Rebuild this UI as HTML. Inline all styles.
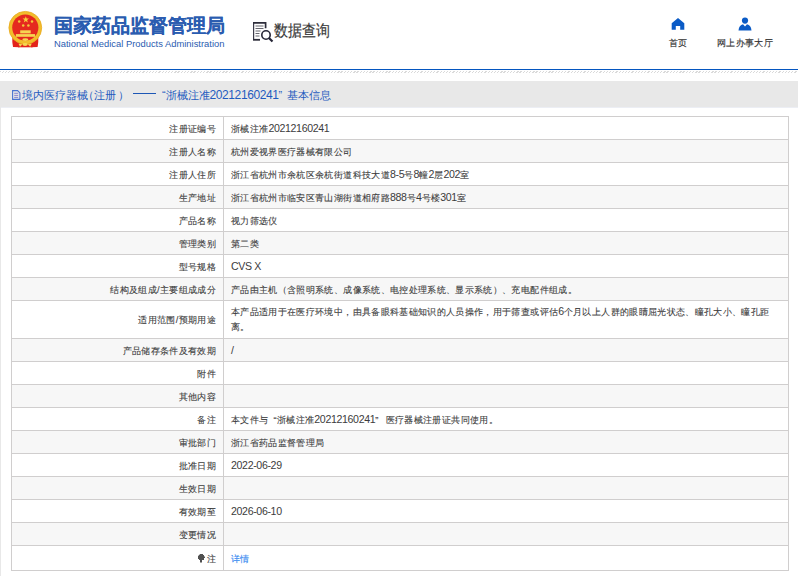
<!DOCTYPE html>
<html><head><meta charset="utf-8">
<style>
*{margin:0;padding:0;box-sizing:border-box}
html,body{width:798px;height:576px;overflow:hidden;background:#fff;font-family:"Liberation Sans",sans-serif;position:relative}
.abs{position:absolute}
#header{position:absolute;left:0;top:0;width:798px;height:69px;background:#fff}
#blueline{position:absolute;left:0;top:69px;width:798px;height:1px;background:#0556c0}
#hatch{position:absolute;left:0;top:71px;width:798px;height:2px;
 background:repeating-linear-gradient(135deg,#dadada 0 0.9px,#fff 0.9px 2.26px)}
#graybg{position:absolute;left:0;top:81px;width:798px;height:495px;background:#e8e8e8}
#panel{position:absolute;left:1px;top:107px;width:797px;height:469px;background:#fff;border-top:1px solid #eceef4}
#crumb{position:absolute;left:12px;top:87px;font-size:10.8px;line-height:17px;color:#1f5bbf;white-space:nowrap}
.row{position:absolute;left:11px;width:778px}
.hl{position:absolute;left:11px;width:778px;height:1px;background:#d0cece}
#vl{position:absolute;left:11px;top:116px;width:1px;height:455px;background:#d0cece}
#vr{position:absolute;left:788px;top:116px;width:1px;height:455px;background:#d0cece}
#vm{position:absolute;left:223px;top:116px;width:1px;height:455px;background:#d0cece}
.lab{position:absolute;right:582px;font-size:9.4px;line-height:16px;color:#3c3c3c;-webkit-text-stroke:0.1px #3c3c3c;letter-spacing:0.35px;white-space:nowrap;text-align:right}
.val{position:absolute;left:231px;font-size:9.4px;line-height:16px;color:#3c3c3c;-webkit-text-stroke:0.1px #3c3c3c;letter-spacing:0.35px;white-space:nowrap}
.val.multi{line-height:15px;white-space:normal;width:550px}
.link{color:#2f86f0;-webkit-text-stroke:0.1px #2f86f0}
.lat{font-size:10.6px;letter-spacing:-0.35px;-webkit-text-stroke:0;line-height:0;position:relative;top:0.4px}
.bulb{display:inline-block;width:7px;height:9px;margin-right:1.5px;vertical-align:-1px;background:radial-gradient(circle at 3.3px 3.3px,#505050 3.2px,transparent 3.4px),linear-gradient(#505050,#505050) 2.2px 6px/2.2px 2.5px no-repeat}
</style></head><body>
<div id="header">
 <svg class="abs" style="left:8px;top:10px" width="36" height="40" viewBox="0 0 36 40">
  <path d="M4.3 27 L11 29.5 L11.5 37.3 L5 37 Q4 32 4.3 27 Z" fill="#e3231a"/>
  <path d="M30.3 27 L23.6 29.5 L23.1 37.3 L29.6 37 Q30.6 32 30.3 27 Z" fill="#e3231a"/>
  <rect x="10" y="31" width="14.6" height="6.3" fill="#e3231a"/>
  <circle cx="17.3" cy="17.8" r="16.4" fill="#f2bd2c"/>
  <circle cx="17.3" cy="17.8" r="16.4" fill="none" stroke="#e9a91e" stroke-width="0.8"/>
  <circle cx="17.3" cy="17.6" r="13.1" fill="#e5291f"/>
  <polygon points="17.8,6.3 18.6,8.6 21,8.6 19.1,10.1 19.8,12.4 17.8,11 15.8,12.4 16.5,10.1 14.6,8.6 17,8.6" fill="#f7d23a"/>
  <circle cx="11.2" cy="11.5" r="1.25" fill="#f2c83a"/>
  <circle cx="24" cy="11.5" r="1.25" fill="#f2c83a"/>
  <circle cx="15.2" cy="15.5" r="1.25" fill="#f2c83a"/>
  <circle cx="20.4" cy="15.5" r="1.25" fill="#f2c83a"/>
  <rect x="12.2" y="20.3" width="10.5" height="3.1" fill="#f6d551"/>
  <rect x="7.9" y="24.1" width="19.1" height="2.7" fill="#f6d551"/>
  <ellipse cx="17.3" cy="29.6" rx="3" ry="1.3" fill="#f6d551"/>
  <ellipse cx="17.1" cy="34.5" rx="2.6" ry="1.4" fill="#f6d551"/>
  <path d="M14.5 34.2 L10.5 33.8 L12 36.8 Z M19.7 34.2 L23.7 33.8 L22.2 36.8 Z" fill="#f6d551"/>
 </svg>
 <div class="abs" style="left:54px;top:13px;font-size:18.8px;line-height:26px;font-weight:bold;color:#2a5cb0;-webkit-text-stroke:0.1px #2a5cb0;white-space:nowrap">国家药品监督管理局</div>
 <div class="abs" style="left:54px;top:37px;font-size:9.4px;line-height:14px;letter-spacing:0;color:#2a5cb0;white-space:nowrap">National Medical Products Administration</div>
 <svg class="abs" style="left:252px;top:21px" width="24" height="22" viewBox="0 0 24 22">
  <path d="M1.6 2 V18" fill="none" stroke="#3a3a48" stroke-width="1.2"/>
  <path d="M1 1.8 H13.6 V7.2" fill="none" stroke="#2d2d3a" stroke-width="1.7"/>
  <path d="M1 18.8 H8" stroke="#2d2d3a" stroke-width="1.8"/>
  <path d="M3.5 5 H11.5 M3.5 7.5 H11.5 M3.5 10 H8.5 M3.5 12.5 H7.5 M3.5 15 H7.5" stroke="#55555f" stroke-width="0.9"/>
  <circle cx="14" cy="14" r="4.2" fill="none" stroke="#262636" stroke-width="1.6"/>
  <path d="M17 17 L20.5 20.5" stroke="#262636" stroke-width="2.2"/>
 </svg>
 <div class="abs" style="left:274px;top:18.5px;font-size:14px;line-height:20px;color:#3a3a3a;-webkit-text-stroke:0.15px #3a3a3a;white-space:nowrap;transform:scaleY(1.14);transform-origin:0 0">数据查询</div>
 <svg class="abs" style="left:671px;top:17px" width="14" height="14" viewBox="0 0 14 14">
  <path d="M7 1 L13.3 6.2 V12.8 H9.2 V9 H4.8 V12.8 H0.7 V6.2 Z" fill="#0b5bc6"/>
 </svg>
 <div class="abs" style="left:668.5px;top:34.5px;font-size:9.4px;line-height:16px;letter-spacing:0.35px;color:#333;-webkit-text-stroke:0.15px #333;white-space:nowrap">首页</div>
 <svg class="abs" style="left:738px;top:17px" width="14" height="14" viewBox="0 0 14 14">
  <circle cx="7" cy="3.6" r="3.1" fill="#0b5bc6"/>
  <path d="M0.5 13.5 Q1 8 5 7.2 L7 9.5 L9 7.2 Q13 8 13.5 13.5 Z" fill="#0b5bc6"/>
 </svg>
 <div class="abs" style="left:717px;top:34.5px;font-size:9.4px;line-height:16px;letter-spacing:0.35px;color:#333;-webkit-text-stroke:0.15px #333;white-space:nowrap">网上办事大厅</div>
</div>
<div id="blueline"></div>
<div id="hatch"></div>
<div id="graybg"></div>
<div id="crumb"><svg style="vertical-align:-1px;margin-right:1.5px" width="8.5" height="10" viewBox="0 0 8.5 10"><path d="M0.6 0.6 H5.6 L7.9 2.9 V9.4 H0.6 Z" fill="none" stroke="#4a74d0" stroke-width="1.1"/><path d="M2.2 3.3 H6.2 M2.2 5.4 H6.2 M2.2 7.4 H6.2" stroke="#7a78c8" stroke-width="0.9"/></svg>境内医疗器械<span style="margin-left:-5px">（</span>注册<span style="margin-left:2px">）</span><span style="display:inline-block;width:23px;height:1px;background:#1d57b5;vertical-align:4.6px;margin-left:4px"></span><span style="margin-left:6px">“</span>浙械注准<span style="font-size:12px;letter-spacing:-0.42px;position:relative;top:0.3px">20212160241</span>”<span style="margin-left:4.5px">基本信息</span></div>
<div id="panel"></div>
<div class="row" style="top:116px;height:23px;background:#ffffff"></div>
<div class="hl" style="top:116px"></div>
<div class="lab" style="top:120.5px">注册证编号</div>
<div class="val" style="top:120.5px">浙械注准<span class="lat">20212160241</span></div>
<div class="row" style="top:139px;height:23px;background:#f7f7f7"></div>
<div class="hl" style="top:139px"></div>
<div class="lab" style="top:143.5px">注册人名称</div>
<div class="val" style="top:143.5px">杭州爱视界医疗器械有限公司</div>
<div class="row" style="top:162px;height:23px;background:#ffffff"></div>
<div class="hl" style="top:162px"></div>
<div class="lab" style="top:166.5px">注册人住所</div>
<div class="val" style="top:166.5px">浙江省杭州市余杭区余杭街道科技大道<span class="lat">8-5</span>号<span class="lat">8</span>幢<span class="lat">2</span>层<span class="lat">202</span>室</div>
<div class="row" style="top:185px;height:23px;background:#f7f7f7"></div>
<div class="hl" style="top:185px"></div>
<div class="lab" style="top:189.5px">生产地址</div>
<div class="val" style="top:189.5px">浙江省杭州市临安区青山湖街道相府路<span class="lat">888</span>号<span class="lat">4</span>号楼<span class="lat">301</span>室</div>
<div class="row" style="top:208px;height:23px;background:#ffffff"></div>
<div class="hl" style="top:208px"></div>
<div class="lab" style="top:212.5px">产品名称</div>
<div class="val" style="top:212.5px">视力筛选仪</div>
<div class="row" style="top:231px;height:23px;background:#f7f7f7"></div>
<div class="hl" style="top:231px"></div>
<div class="lab" style="top:235.5px">管理类别</div>
<div class="val" style="top:235.5px">第二类</div>
<div class="row" style="top:254px;height:23px;background:#ffffff"></div>
<div class="hl" style="top:254px"></div>
<div class="lab" style="top:258.5px">型号规格</div>
<div class="val" style="top:258.5px"><span class="lat">CVS X</span></div>
<div class="row" style="top:277px;height:23px;background:#f7f7f7"></div>
<div class="hl" style="top:277px"></div>
<div class="lab" style="top:281.5px">结构及组成/主要组成成分</div>
<div class="val" style="top:281.5px">产品由主机（含照明系统、成像系统、电控处理系统、显示系统）、充电配件组成。</div>
<div class="row" style="top:300px;height:38px;background:#ffffff"></div>
<div class="hl" style="top:300px"></div>
<div class="lab" style="top:312.0px">适用范围/预期用途</div>
<div class="val multi" style="top:304px">本产品适用于在医疗环境中，由具备眼科基础知识的人员操作，用于筛查或评估<span class="lat">6</span>个月以上人群的眼睛屈光状态、瞳孔大小、瞳孔距<br>离。</div>
<div class="row" style="top:338px;height:23px;background:#f7f7f7"></div>
<div class="hl" style="top:338px"></div>
<div class="lab" style="top:342.5px">产品储存条件及有效期</div>
<div class="val" style="top:342.5px"><span class="lat">/</span></div>
<div class="row" style="top:361px;height:23px;background:#ffffff"></div>
<div class="hl" style="top:361px"></div>
<div class="lab" style="top:365.5px">附件</div>
<div class="val" style="top:365.5px"></div>
<div class="row" style="top:384px;height:23px;background:#f7f7f7"></div>
<div class="hl" style="top:384px"></div>
<div class="lab" style="top:388.5px">其他内容</div>
<div class="val" style="top:388.5px"></div>
<div class="row" style="top:407px;height:23px;background:#ffffff"></div>
<div class="hl" style="top:407px"></div>
<div class="lab" style="top:411.5px">备注</div>
<div class="val" style="top:411.5px">本文件与<span style="margin-left:5px">“</span>浙械注准<span class="lat">20212160241</span>”<span style="margin-left:7px">医疗器械注册证共同使用。</span></div>
<div class="row" style="top:430px;height:23px;background:#f7f7f7"></div>
<div class="hl" style="top:430px"></div>
<div class="lab" style="top:434.5px">审批部门</div>
<div class="val" style="top:434.5px">浙江省药品监督管理局</div>
<div class="row" style="top:453px;height:23px;background:#ffffff"></div>
<div class="hl" style="top:453px"></div>
<div class="lab" style="top:457.5px">批准日期</div>
<div class="val" style="top:457.5px"><span class="lat">2022-06-29</span></div>
<div class="row" style="top:476px;height:23px;background:#f7f7f7"></div>
<div class="hl" style="top:476px"></div>
<div class="lab" style="top:480.5px">生效日期</div>
<div class="val" style="top:480.5px"></div>
<div class="row" style="top:499px;height:23px;background:#ffffff"></div>
<div class="hl" style="top:499px"></div>
<div class="lab" style="top:503.5px">有效期至</div>
<div class="val" style="top:503.5px"><span class="lat">2026-06-10</span></div>
<div class="row" style="top:522px;height:23px;background:#f7f7f7"></div>
<div class="hl" style="top:522px"></div>
<div class="lab" style="top:526.5px">变更情况</div>
<div class="val" style="top:526.5px"></div>
<div class="row" style="top:545px;height:25px;background:#ffffff"></div>
<div class="hl" style="top:545px"></div>
<div class="lab" style="top:550.5px"><span class="bulb"></span>注</div>
<div class="val" style="top:550.5px"><span class="link">详情</span></div>
<div class="hl" style="top:570px"></div>
<div id="vl"></div><div id="vr"></div><div id="vm"></div>
</body></html>
